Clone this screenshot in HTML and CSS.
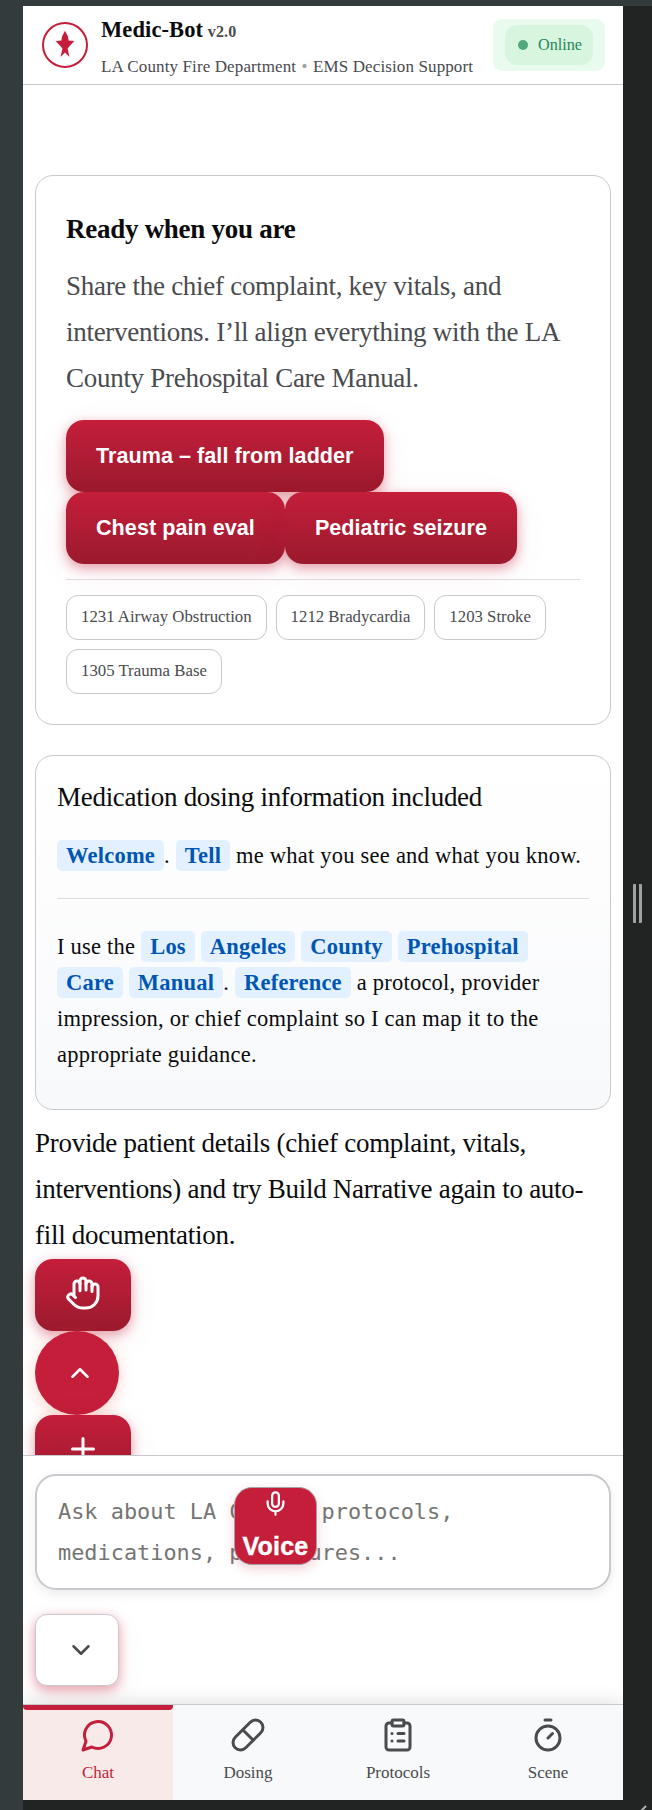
FILE: index.html
```html
<!DOCTYPE html>
<html lang="en">
<head>
<meta charset="utf-8">
<title>Medic-Bot</title>
<link rel="stylesheet" href="styles.css">
</head>
<body>
<div class="stage">
  <div class="app">
    <header class="header">
      <svg class="logo" viewBox="0 0 46 46"><circle cx="23" cy="23" r="22" fill="#fff" stroke="#c41e3a" stroke-width="2"/><path fill="#c41e3a" d="M23 8.700l3 5.800.6 4 5.700.4-5.500 6-1.200 1.900 1.900 8.200-4.500-4.500-4.500 4.500 1.900-8.200-1.200-1.900-5.500-6 5.700-.4.6-4z"/></svg>
      <div class="brand">
        <div class="title">Medic-Bot <span class="version">v2.0</span></div>
        <div class="subtitle">LA County Fire Department <span class="sep">•</span> EMS Decision Support</div>
      </div>
      <div class="status"><div class="status-in"><span class="dot"></span>Online</div></div>
    </header>

    <main class="main">
      <section class="card ready">
        <h2>Ready when you are</h2>
        <p>Share the chief complaint, key vitals, and interventions. I’ll align everything with the LA County Prehospital Care Manual.</p>
        <div class="prompts">
          <button class="btn">Trauma – fall from ladder</button>
          <button class="btn">Chest pain eval</button>
          <button class="btn">Pediatric seizure</button>
        </div>
        <div class="chips">
          <span class="chip">1231 Airway Obstruction</span>
          <span class="chip">1212 Bradycardia</span>
          <span class="chip">1203 Stroke</span>
          <span class="chip">1305 Trauma Base</span>
        </div>
      </section>

      <section class="card intro">
        <div class="intro-title">Medication dosing information included</div>
        <p class="line"><b>Welcome</b>. <b>Tell</b> me what you see and what you know.</p>
        <p class="line second">I use the <b>Los</b> <b>Angeles</b> <b>County</b> <b>Prehospital</b> <b>Care</b> <b>Manual</b>. <b>Reference</b> a protocol, provider impression, or chief complaint so I can map it to the appropriate guidance.</p>
      </section>

      <p class="hint">Provide patient details (chief complaint, vitals, interventions) and try Build Narrative again to auto-fill documentation.</p>
      <div class="actions">
        <button class="btn icon-btn"><svg class="i36" viewBox="0 0 24 24"><path d="M18 11V6a2 2 0 0 0-4 0"/><path d="M14 10V4a2 2 0 0 0-4 0v2"/><path d="M10 10.500V6a2 2 0 0 0-4 0v8"/><path d="M18 8a2 2 0 1 1 4 0v6a8 8 0 0 1-8 8h-2c-2.800 0-4.500-.860-5.990-2.340l-3.600-3.600a2 2 0 0 1 2.830-2.820L7 15"/></svg></button>
        <button class="round"><svg class="i30" viewBox="0 0 24 24"><path d="m18 15-6-6-6 6"/></svg></button>
        <button class="btn icon-btn"><svg class="i36" viewBox="0 0 24 24"><path d="M5 12h14M12 5v14"/></svg></button>
      </div>
    </main>

    <section class="composer">
      <div class="input">Ask about LA County protocols,<br>medications, procedures...
        <button class="voice"><svg class="mic" viewBox="0 0 24 24"><path d="M12 2a3 3 0 0 0-3 3v7a3 3 0 0 0 6 0V5a3 3 0 0 0-3-3z"/><path d="M19 10v2a7 7 0 0 1-14 0v-2M12 19v3"/></svg><span>Voice</span></button>
      </div>
      <button class="collapse"><svg class="i30" viewBox="0 0 24 24"><path d="m6 9 6 6 6-6"/></svg></button>
    </section>

    <nav class="nav">
      <a class="tab active"><svg class="i36" viewBox="0 0 24 24"><path d="M7.900 20A9 9 0 1 0 4 16.100L2 22Z"/></svg>Chat</a>
      <a class="tab"><svg class="i36" viewBox="0 0 24 24"><path d="m10.500 20.500 10-10a4.950 4.950 0 1 0-7-7l-10 10a4.950 4.950 0 1 0 7 7Z"/><path d="m8.500 8.500 7 7"/></svg>Dosing</a>
      <a class="tab"><svg class="i36" viewBox="0 0 24 24"><rect x="8" y="2" width="8" height="4" rx="1"/><path d="M16 4h2a2 2 0 0 1 2 2v14a2 2 0 0 1-2 2H6a2 2 0 0 1-2-2V6a2 2 0 0 1 2-2h2M12 11h4M12 16h4M8 11h.010M8 16h.010"/></svg>Protocols</a>
      <a class="tab"><svg class="i36" viewBox="0 0 24 24"><path d="M10 2h4M12 14l3-3"/><circle cx="12" cy="14" r="8"/></svg>Scene</a>
    </nav>
  </div>
  <div class="gutter"><span class="grip"></span></div>
  <svg class="corner" viewBox="0 0 8 5"><path d="M1 6 5.500 1.500"/></svg>
</div>
</body>
</html>
```
FILE: styles.css
```css
* { box-sizing: border-box; }
body { margin: 0; background: #222423; font-family: "Liberation Serif", "Times New Roman", serif; color: #0b0b0d; }
h2, p { margin: 0; }
button { font: inherit; border: 0; padding: 0; margin: 0; }
svg { fill: none; stroke: currentColor; stroke-width: 2; stroke-linecap: round; stroke-linejoin: round; flex: none; display: block; }
.stage { position: relative; height: 1810px; display: flex; padding: 6px 0 10px 23px; background: linear-gradient(#343b3d, #343b3d) 0 0 / 23px 100% no-repeat, linear-gradient(#343b3d, #343b3d) 0 0 / 100% 6px no-repeat, #222423; overflow: hidden; }
.app { width: 600px; height: 1794px; display: flex; flex-direction: column; background: #fff; overflow: hidden; }
.gutter { flex: 1; display: flex; align-items: center; padding-left: 10px; }
.grip { width: 9px; height: 39px; border: solid #a0a1a1; border-width: 0 3px; border-radius: 1px; }
.corner { position: absolute; right: 4px; bottom: 0; width: 8px; height: 5px; color: #b0b0b0; }

.header { height: 79px; flex: none; display: flex; border-bottom: 1px solid #c8c9ce; padding: 0 18px 0 19px; }
.logo { width: 46px; height: 46px; margin-top: 16px; stroke: none; }
.brand { margin-left: 13px; flex: 1; white-space: nowrap; }
.title { font-size: 22.5px; font-weight: bold; line-height: 36px; margin-top: 6px; height: 36px; letter-spacing: 0.1px; }
.version { font-size: 16px; color: #4a4b4f; margin-left: -1px; }
.subtitle { font-size: 17px; line-height: 26px; margin-top: 6px; color: #4a4b4f; letter-spacing: 0.12px; }
.sep { color: #a0a0a4; margin: 0 1px; }
.status { width: 112px; height: 52px; margin-top: 13px; padding: 6px 12px; background: #e9faee; border-radius: 9px; }
.status-in { height: 40px; background: #d7f5df; border-radius: 12px; display: flex; align-items: center; padding-left: 13px; gap: 10px; font-size: 16.200px; color: #1f8658; }
.dot { width: 10px; height: 10px; border-radius: 50%; background: #53a97e; }

.main { height: 1370px; flex: none; overflow: hidden; padding: 90px 12px 0; }
.card { border: 1px solid #c8c9cb; border-radius: 18px; }
.ready { height: 550px; padding: 30px; }
.ready h2 { font-size: 27px; line-height: 46px; letter-spacing: -0.27px; }
.ready p { font-size: 27px; line-height: 45.900px; color: #4a4b4f; margin-top: 12px; letter-spacing: -0.28px; }
.prompts { display: flex; flex-wrap: wrap; margin-top: 18px; }
.btn { height: 72px; border-radius: 18px; padding: 0 30px; color: #fff; font: bold 21.600px "Liberation Sans", Arial, sans-serif; letter-spacing: 0.03px; background: linear-gradient(#c41e3a, #9b1a2d); box-shadow: 0 4px 12px rgba(196,30,58,.4), 0 8px 32px rgba(196,30,58,.08); }
.chips { display: flex; flex-wrap: wrap; gap: 9px; margin-top: 15px; padding-top: 15px; border-top: 1px solid rgba(30,30,40,.14); }
.chip { height: 45px; border: 1px solid #c8c9cb; border-radius: 12px; padding: 0 14px; font-size: 16.800px; line-height: 42px; color: #4a4b4f; background: #fff; }

.intro { height: 355px; margin-top: 30px; padding: 18px 21px; background: linear-gradient(#fff, #f8f9fb); }
.intro-title { font-size: 27px; line-height: 46px; letter-spacing: -0.28px; }
.line { font-size: 22.500px; line-height: 36px; letter-spacing: 0.23px; }
.intro-title + .line { margin-top: 18px; padding-bottom: 24px; height: 61px; border-bottom: 1px solid #dcdde0; }
.line b { color: #0056b3; background: #e3f0ff; border-radius: 5px; padding: 3px 9px; }
.second { margin-top: 30px; }
.hint { font-size: 27px; line-height: 45.900px; margin-top: 11px; letter-spacing: -0.28px; }
.actions { display: flex; flex-direction: column; align-items: flex-start; }
.icon-btn { width: 96px; padding-bottom: 4px; display: flex; align-items: center; justify-content: center; }
.i36 { width: 36px; height: 36px; }
.i30 { width: 30px; height: 30px; }
.round { width: 84px; height: 84px; border-radius: 50%; background: #c41e3a; color: #fff; padding: 0 0 0 30px; box-shadow: 0 4px 16px rgba(255,80,50,.25); }

.composer { height: 249px; flex: none; border-top: 1px solid #c8c9ce; padding: 18px 12px 0; }
.input { position: relative; height: 116px; border: 2px solid #c8c9ce; border-radius: 21px; padding: 15px 21px; font: 21.900px/41px "DejaVu Sans Mono", monospace; color: #757575; box-shadow: 0 4px 12px rgba(0,0,0,.08); }
.voice { position: absolute; left: 197px; top: 11px; width: 83px; height: 78px; border: 1px solid #a8a0a8; border-radius: 18px; background: #c41e3a; color: #fff; font: bold 25px/30px "Liberation Sans", Arial, sans-serif; letter-spacing: 0.2px; display: flex; flex-direction: column; align-items: center; padding-top: 2px; box-shadow: 0 4px 12px rgba(196,30,58,.2); -webkit-text-stroke: 0.4px #fff; }
.mic { width: 27px; height: 27px; }
.voice span { margin-top: 14px; }
.collapse { width: 84px; height: 72px; margin-top: 24px; display: flex; align-items: center; padding-left: 30px; border: 1px solid #c8c9ce; border-radius: 12px; background: #fff; color: #4a4b4f; box-shadow: 0 4px 12px rgba(196,30,58,.4), 0 8px 32px rgba(196,30,58,.06); }

.nav { height: 96px; flex: none; display: flex; border-top: 1px solid #c8c9ce; background: #f8f9fb; box-shadow: 0 -4px 16px rgba(0,0,0,.1); }
.tab { position: relative; flex: 1; display: flex; flex-direction: column; align-items: center; padding-top: 12px; gap: 7px; font-size: 17px; line-height: 26px; color: #4a4b4f; }
.active { color: #c41e3a; background: #f8eae9; }
.active::before { content: ""; position: absolute; left: 0; right: 0; top: 0; height: 5px; background: #c41e3a; border-radius: 0 0 4px 4px; }
```
